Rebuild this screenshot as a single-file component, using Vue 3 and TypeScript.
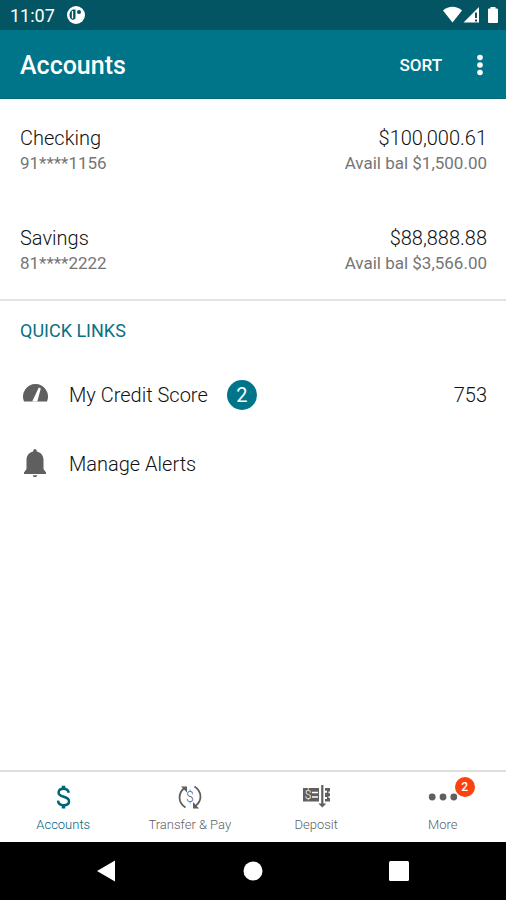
<script setup lang="ts">
interface Account {
  name: string
  mask: string
  balance: string
  available: string
}

type TabId = 'accounts' | 'transfer' | 'deposit' | 'more'

interface Tab {
  id: TabId
  label: string
  badge?: number
}

const accounts: Account[] = [
  { name: 'Checking', mask: '91****1156', balance: '$100,000.61', available: '$1,500.00' },
  { name: 'Savings', mask: '81****2222', balance: '$88,888.88', available: '$3,566.00' },
]

const tabs: Tab[] = [
  { id: 'accounts', label: 'Accounts' },
  { id: 'transfer', label: 'Transfer & Pay' },
  { id: 'deposit', label: 'Deposit' },
  { id: 'more', label: 'More', badge: 2 },
]

const activeTab: TabId = 'accounts'
</script>

<template>
  <div class="screen">
    <div class="status">
      <span class="clock">11:07</span>
      <svg width="18" height="18" viewBox="0 0 18 18" aria-hidden="true">
        <circle cx="9" cy="9" r="9" fill="#fff" />
        <path d="M8.5 3.5H6C3.5 4.500 2.500 6.500 2.500 9s1 4.500 3.500 5l2.500-1.500z" fill="#035564" />
        <path d="M5.500 5V12.500" stroke="#fff" stroke-width="1.300" />
        <circle cx="12" cy="6" r="2" fill="#035564" />
      </svg>
      <span class="spacer"></span>
      <svg width="56" height="18" viewBox="0 0 56 18" fill="#fff" aria-hidden="true">
        <path d="M0 4.500C5.500-.4 13.500-.4 19 4.500L9.500 16.500z" />
        <path d="M36 1v15.500H20.500z" />
        <path d="M33 6.500v5.500M33 13.500v2" stroke="#035564" stroke-width="2" fill="none" />
        <path d="M47.500 2.500V1h5v1.500H54a1 1 0 0 1 1 1V16a1 1 0 0 1-1 1h-8a1 1 0 0 1-1-1V3.500a1 1 0 0 1 1-1z" />
      </svg>
    </div>

    <header class="appbar">
      <h1>Accounts</h1>
      <button type="button" class="sort">SORT</button>
      <button type="button" class="overflow" aria-label="More options">
        <svg width="6" height="22" viewBox="0 0 6 22" fill="#fff">
          <circle cx="3" cy="3.500" r="2.800" />
          <circle cx="3" cy="11" r="2.800" />
          <circle cx="3" cy="18.500" r="2.800" />
        </svg>
      </button>
    </header>

    <main>
      <section class="accounts">
        <a v-for="account in accounts" :key="account.mask" href="#" class="account">
          <span class="pair">
            <span class="primary">{{ account.name }}</span>
            <span class="secondary">{{ account.mask }}</span>
          </span>
          <span class="pair end">
            <span class="primary">{{ account.balance }}</span>
            <span class="secondary">Avail bal {{ account.available }}</span>
          </span>
        </a>
      </section>

      <section class="links">
        <h2>QUICK LINKS</h2>
        <a href="#" class="link">
          <svg width="30" height="30" viewBox="0 0 30 30" aria-hidden="true">
            <path d="M4 21.500A12.500 12.500 0 1 1 27 21.500z" fill="#5f5f5f" />
            <path d="M12.200 21.500 18.800 7.500l2 1-3.500 13z" fill="#fff" />
          </svg>
          <span class="label">My Credit Score</span>
          <span class="count">2</span>
          <span class="score">753</span>
        </a>
        <a href="#" class="link">
          <svg width="30" height="30" viewBox="0 0 30 30" fill="#5f5f5f" aria-hidden="true">
            <path d="M15 0c1.100 0 1.600 1 1.900 2.500 4.300 1.100 6.600 4.300 6.600 8.500v9l2.500 3.500v1.500H4v-1.500L6.500 20v-9c0-4.200 2.300-7.400 6.600-8.500C13.400 1 13.900 0 15 0z" />
            <path d="M12.800 26.200h4.400c0 1.200-1 1.800-2.200 1.800s-2.200-.6-2.200-1.800z" />
          </svg>
          <span class="label">Manage Alerts</span>
        </a>
      </section>
    </main>

    <nav class="tabs">
      <a
        v-for="tab in tabs"
        :key="tab.id"
        href="#"
        class="tab"
        :class="{ active: tab.id === activeTab }"
      >
        <span class="glyph">
          <svg width="30" height="26" viewBox="0 0 30 26" aria-hidden="true">
            <g v-if="tab.id === 'accounts'" fill="none" stroke="currentColor" stroke-width="2.500">
              <path d="M20.700 8.800C20.300 6.300 18.500 4.800 15.500 4.800c-2.900 0-4.900 1.500-4.900 3.900 0 5.200 10.400 3 10.400 8.500 0 2.500-2.100 4-5.400 4-3.400 0-5.400-1.700-5.600-4.500" />
              <path d="M15.500 1.800v3M15.500 21.500v3" stroke-width="3.500" />
            </g>
            <g v-else-if="tab.id === 'transfer'" fill="none" stroke="currentColor" stroke-width="1.800">
              <path d="M10.500 23.500C3 18.500 2.500 9.500 9.500 4" />
              <path d="M19.500 2.500c7.500 5 8 14 1 19.500" />
              <path d="M6 2.500h6v6z" fill="currentColor" stroke="none" />
              <path d="M18 18v6.500h6z" fill="currentColor" stroke="none" />
              <text x="15" y="18" text-anchor="middle" class="mark">$</text>
            </g>
            <g v-else-if="tab.id === 'deposit'">
              <path d="M2 4h16v13.500H2zM24 4h5v3.500h-1.500v1.800H29v3h-1.500V14H29v3.500h-5V15h2v-2h-2V8.800h2v-2h-2z" fill="currentColor" />
              <path d="M11 8.500h6M11 13h6" stroke="#fff" stroke-width="1.400" />
              <text x="7" y="15" text-anchor="middle" class="mark light">$</text>
              <path d="M21.300 1v20" stroke="currentColor" stroke-width="2.200" />
              <path d="M17.300 19.500h8l-4 4z" fill="currentColor" />
            </g>
            <g v-else fill="currentColor">
              <circle cx="4.200" cy="13" r="3.400" />
              <circle cx="15" cy="13" r="3.400" />
              <circle cx="25.800" cy="13" r="3.400" />
            </g>
          </svg>
          <span v-if="tab.badge" class="badge">{{ tab.badge }}</span>
        </span>
        <span class="tab-label">{{ tab.label }}</span>
      </a>
    </nav>

    <div class="system">
      <button type="button" aria-label="Back">
        <svg width="20" height="22" viewBox="0 0 20 22"><path d="M0 11 18 .5v21z" fill="#fff" /></svg>
      </button>
      <button type="button" aria-label="Home">
        <svg width="20" height="20" viewBox="0 0 20 20"><circle cx="10" cy="10" r="9.500" fill="#fff" /></svg>
      </button>
      <button type="button" aria-label="Recent apps">
        <svg width="20" height="20" viewBox="0 0 20 20"><rect width="20" height="20" rx="1.500" fill="#fff" /></svg>
      </button>
    </div>
  </div>
</template>

<style>
body {
  margin: 0;
  background: #fff;
}
</style>

<style scoped>
.screen {
  display: flex;
  flex-direction: column;
  min-height: 100vh;
  background: #fff;
  color: #111;
  font-family: Roboto, "Liberation Sans", sans-serif;
}

a {
  color: inherit;
  text-decoration: none;
}

button {
  padding: 0;
  border: 0;
  background: none;
  color: inherit;
  font-family: inherit;
}

svg {
  display: block;
  flex: none;
}

.status {
  display: flex;
  align-items: center;
  gap: 12px;
  height: 30px;
  padding: 0 7px 0 10px;
  background: #035564;
  color: #fff;
}

.clock {
  padding-top: 2px;
  font-size: 18px;
  line-height: 24px;
}

.spacer {
  flex: 1;
}

.appbar {
  display: flex;
  align-items: center;
  box-sizing: border-box;
  height: 69px;
  padding: 2px 16px 0 20px;
  border-bottom: 1px solid #04677a;
  background: #007589;
  color: #fff;
}

h1 {
  flex: 1;
  margin: 0;
  padding-top: 2px;
  font-size: 25px;
  font-weight: 500;
  line-height: 32px;
}

.sort {
  margin-right: 28px;
  font-size: 17px;
  font-weight: 500;
  line-height: 24px;
}

.overflow {
  width: 20px;
  display: flex;
  justify-content: center;
}

main {
  flex: 1;
}

.accounts {
  border-bottom: 2px solid #e3e3e3;
}

.account {
  display: flex;
  justify-content: space-between;
  padding: 26px 19px 24px 20px;
}

.pair {
  display: flex;
  flex-direction: column;
}

.end {
  text-align: right;
}

.primary {
  font-size: 20px;
  font-weight: 300;
  line-height: 26px;
}

.secondary {
  color: #757575;
  font-size: 17px;
  font-weight: 400;
  line-height: 24px;
}

.links {
  padding: 18px 19px 0 20px;
}

h2 {
  margin: 0 0 17px;
  color: #0c7083;
  font-size: 18px;
  font-weight: 400;
  line-height: 24px;
}

.link {
  display: flex;
  align-items: center;
  height: 69px;
}

.label {
  margin-left: 19px;
  font-size: 20px;
  font-weight: 300;
  line-height: 26px;
}

.count {
  width: 30px;
  margin-left: 19px;
  border-radius: 50%;
  background: #007589;
  color: #fff;
  font-size: 20px;
  line-height: 30px;
  text-align: center;
}

.score {
  margin-left: auto;
  font-size: 20px;
  font-weight: 300;
  line-height: 26px;
}

.tabs {
  display: grid;
  grid-template-columns: repeat(4, 1fr);
  border-top: 2px solid #dedede;
}

.tab {
  display: flex;
  flex-direction: column;
  align-items: center;
  gap: 6px;
  height: 70px;
  padding-top: 12px;
  box-sizing: border-box;
  color: #5f5f5f;
}

.active {
  color: #006478;
}

.glyph {
  position: relative;
}

.tab-label {
  font-size: 13px;
  font-weight: 300;
  line-height: 18px;
}

.mark {
  fill: currentColor;
  stroke: none;
  font-size: 14px;
  font-weight: 300;
}

.light {
  fill: #fff;
  font-size: 12px;
}

.badge {
  position: absolute;
  top: -7px;
  left: 27px;
  width: 20px;
  border-radius: 50%;
  background: #fb4310;
  color: #fff;
  font-size: 12px;
  font-weight: 500;
  line-height: 20px;
  text-align: center;
}

.system {
  display: flex;
  justify-content: center;
  align-items: center;
  gap: 126px;
  height: 58px;
  background: #000;
}
</style>
